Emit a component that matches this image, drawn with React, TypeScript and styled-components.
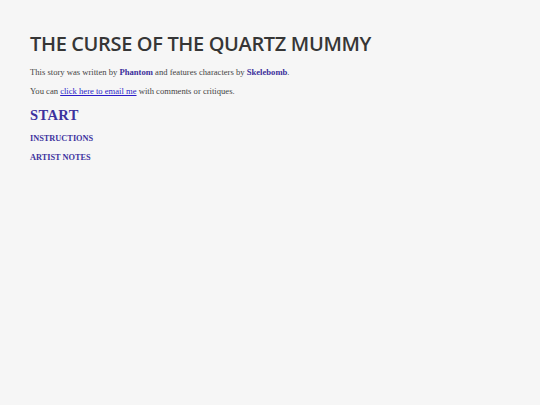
import styled, { createGlobalStyle } from 'styled-components'

const GlobalStyle = createGlobalStyle`
  html, body {
    margin: 0;
    padding: 0;
    background: #f6f6f6;
  }
  body {
    font-family: "Liberation Serif", "DejaVu Serif", serif;
  }
`

const Page = styled.main`
  min-height: 100vh;
  padding: 32px 30px;
  box-sizing: border-box;
  background: #f6f6f6;
`

const Title = styled.h1`
  font-family: "Open Sans", "Noto Sans", sans-serif;
  font-weight: 600;
  font-size: 20px;
  line-height: 24px;
  letter-spacing: -0.35px;
  color: #363636;
  margin: 0 0 10.5px;
`

const Para = styled.p`
  font-size: 8.6px;
  color: #444;
  margin: 0 0 8px;
  line-height: 11px;
`

const Name = styled.strong`
  color: #3b2f9b;
  font-weight: bold;
`

const MailLink = styled.a`
  color: #2a1cc8;
  text-decoration: underline;
`

const Nav = styled.nav`
  display: flex;
  flex-direction: column;
  align-items: flex-start;
  gap: 8.5px;
  margin-top: 9.5px;
`

const NavLink = styled.a<{ $big?: boolean }>`
  color: #3d329e;
  font-weight: bold;
  text-decoration: none;
  font-size: ${p => (p.$big ? '14.5px' : '8.3px')};
  line-height: ${p => (p.$big ? '18px' : '11px')};
  letter-spacing: ${p => (p.$big ? '0.4px' : '0')};
`

export default function App() {
  return (
    <>
      <GlobalStyle />
      <Page>
        <Title>THE CURSE OF THE QUARTZ MUMMY</Title>
        <Para>
          This story was written by <Name>Phantom</Name> and features characters by{' '}
          <Name>Skelebomb</Name>.
        </Para>
        <Para>
          You can <MailLink href="#">click here to email me</MailLink> with comments or critiques.
        </Para>
        <Nav>
          <NavLink href="#" $big>START</NavLink>
          <NavLink href="#">INSTRUCTIONS</NavLink>
          <NavLink href="#">ARTIST NOTES</NavLink>
        </Nav>
      </Page>
    </>
  )
}
